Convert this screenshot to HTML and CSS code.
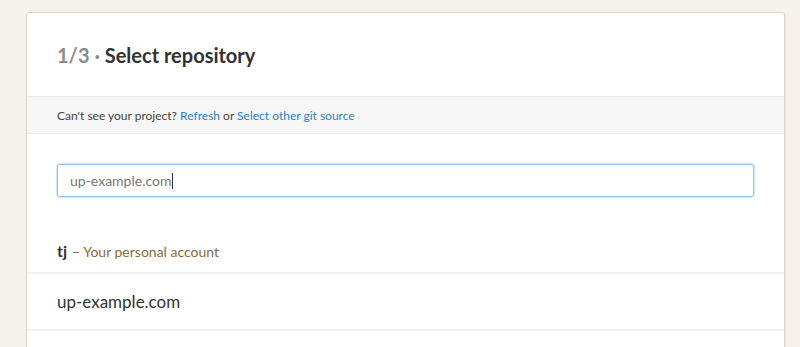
FILE: index.html
```html
<!DOCTYPE html>
<html lang="en">
<head>
    <meta charset="UTF-8">
    <meta name="viewport" content="width=device-width, initial-scale=1.0">
    <title>Select repository</title>
    <link rel="stylesheet" href="styles.css">
</head>
<body>

    <!-- Step card -->
    <div class="card">
        <div class="card-header">
            <h2><span class="step">1/3 &middot;</span> Select repository</h2>
        </div>

        <div class="notice">
            <span>Can't see your project? <a href="#">Refresh</a> or <a href="#">Select other git source</a></span>
        </div>

        <div class="search">
            <div class="search-input">up-example.com<span class="caret"></span></div>
        </div>

        <div class="account">
            <strong>tj</strong> <span class="account-note">&ndash; Your personal account</span>
        </div>

        <ul class="repo-list">
            <li>up-example.com</li>
        </ul>
    </div>

</body>
</html>
```

FILE: styles.css
```css
/* General styles */
body {
    font-family: Lato, "Open Sans", sans-serif;
    margin: 0;
    padding: 12px 15px 0 26px;
    background-color: #f5f2eb;
    color: #333;
    height: 347px;
    box-sizing: border-box;
    overflow: hidden;
}

/* Card */
.card {
    background-color: #fff;
    border: 1px solid #ddd8c6;
    border-radius: 3px;
    box-shadow: 1px 1px 0 #e8e3d6;
    height: 340px;
    overflow: hidden;
}

.card-header {
    height: 83px;
    padding: 0 30px;
    display: flex;
    align-items: center;
}

.card-header h2 {
    margin: 0;
    font-size: 20px;
    font-weight: bold;
    color: #333;
}

.step {
    color: #8c8c8c;
}

/* Notice bar */
.notice {
    background-color: #f6f6f6;
    border-top: 1px solid #ececec;
    border-bottom: 1px solid #ececec;
    height: 36px;
    padding: 0 30px;
    display: flex;
    align-items: center;
    font-size: 12px;
    color: #444;
}

.notice a {
    color: #2d83c8;
    text-decoration: none;
}

/* Search input */
.search {
    padding: 30px 30px 0 30px;
}

.search-input {
    width: 697px;
    height: 33px;
    box-sizing: border-box;
    border: 1px solid #94c5ee;
    border-radius: 3px;
    box-shadow: 0 0 0 1px #cfe5f8;
    padding: 0 12px;
    display: flex;
    align-items: center;
    font-size: 14px;
    color: #777;
}

.caret {
    display: inline-block;
    width: 1px;
    height: 16px;
    background-color: #333;
    margin-left: 1px;
}

/* Account heading */
.account {
    height: 77px;
    padding: 0 30px 12px 30px;
    box-sizing: border-box;
    display: flex;
    align-items: flex-end;
    border-bottom: 2px solid #f2f2f2;
}

.account strong {
    font-size: 16px;
    color: #333;
    margin-right: 5px;
}

.account-note {
    font-size: 14px;
    color: #8a6a3c;
}

/* Repo list */
.repo-list {
    list-style: none;
    margin: 0;
    padding: 0;
}

.repo-list li {
    height: 55px;
    padding: 0 30px;
    display: flex;
    align-items: center;
    font-size: 17px;
    color: #333;
    border-bottom: 2px solid #f2f2f2;
}
```
